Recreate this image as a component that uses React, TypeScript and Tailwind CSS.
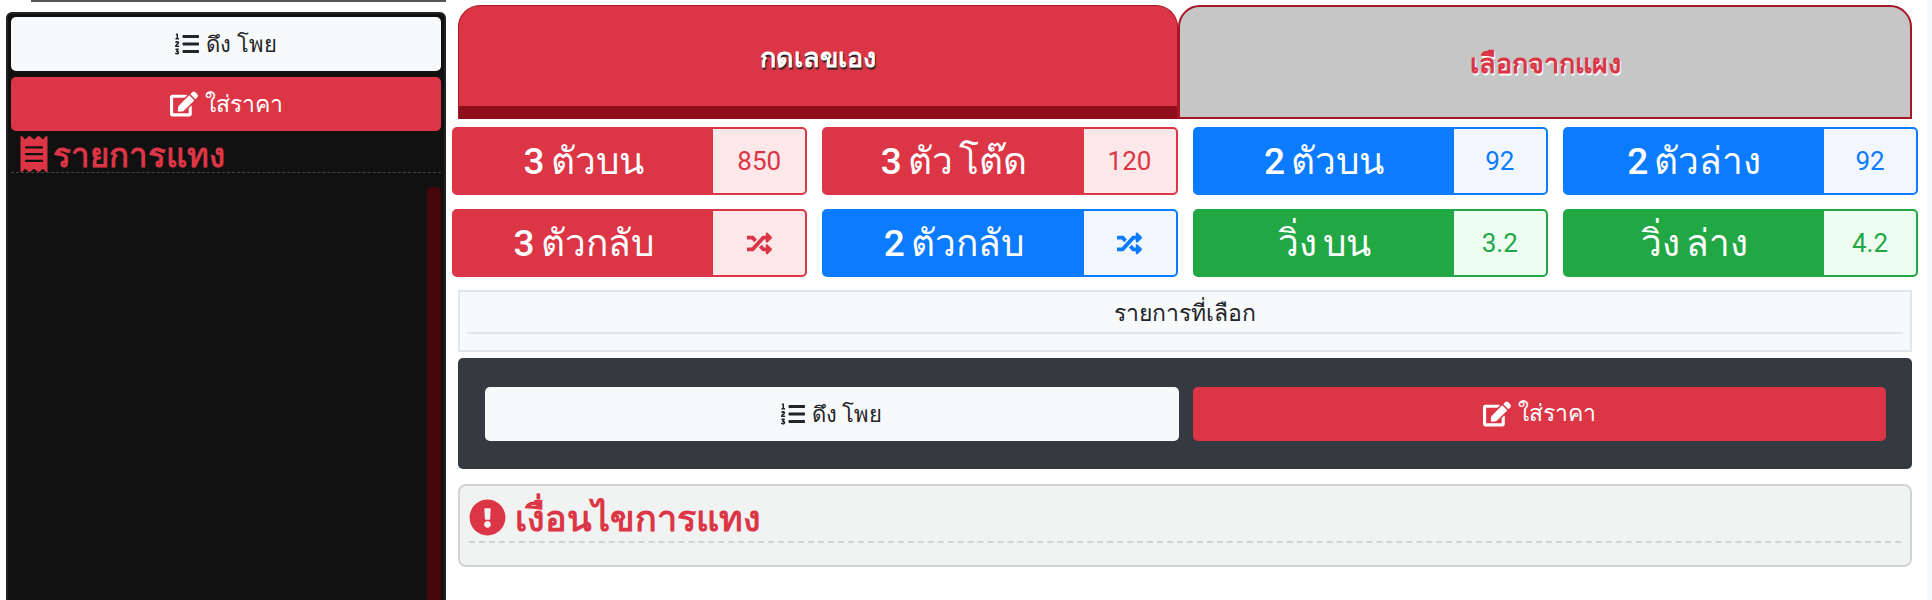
import { FaEdit, FaExclamationCircle, FaListOl, FaRandom, FaReceipt } from "react-icons/fa";
import type { ReactNode } from "react";

const tones = {
  red: { bar: "bg-[#dc3545]", border: "border-[#dc3545]", box: "bg-[#fde8e9]", text: "text-[#dc3545]" },
  blue: { bar: "bg-[#0b7bff]", border: "border-[#0b7bff]", box: "bg-[#f2f7ff]", text: "text-[#0b7bff]" },
  green: { bar: "bg-[#22a745]", border: "border-[#22a745]", box: "bg-[#edfdf1]", text: "text-[#22a745]" },
};

const rates: { label: string; value: ReactNode; tone: keyof typeof tones }[] = [
  { label: "3 ตัวบน", value: "850", tone: "red" },
  { label: "3 ตัว โต๊ด", value: "120", tone: "red" },
  { label: "2 ตัวบน", value: "92", tone: "blue" },
  { label: "2 ตัวล่าง", value: "92", tone: "blue" },
  { label: "3 ตัวกลับ", value: <FaRandom className="text-[25px]" />, tone: "red" },
  { label: "2 ตัวกลับ", value: <FaRandom className="text-[25px]" />, tone: "blue" },
  { label: "วิ่ง บน", value: "3.2", tone: "green" },
  { label: "วิ่ง ล่าง", value: "4.2", tone: "green" },
];

function PullButton() {
  return (
    <button className="flex h-[54px] flex-1 items-center justify-center gap-[7px] rounded-[5px] bg-[#f8f9fa] text-[22px] font-medium text-[#212529]">
      <FaListOl className="text-[24px]" />
      <span className="pt-[1px]">ดึง โพย</span>
    </button>
  );
}

function PriceButton() {
  return (
    <button className="flex h-[54px] flex-1 items-center justify-center gap-[7px] rounded-[5px] bg-[#dc3545] text-[23px] font-medium text-white">
      <FaEdit className="text-[28px]" />
      <span className="pt-[2px]">ใส่ราคา</span>
    </button>
  );
}

export default function App() {
  return (
    <div className="flex h-[600px] overflow-hidden bg-white font-['Roboto','Noto_Sans',sans-serif]">
      <aside className="w-[452px] shrink-0 pl-[6px]">
        <div className="ml-[25px] mr-[6px] h-[2px] bg-[#555555]" />
        <div className="mr-[6px] mt-[10px] flex h-[600px] flex-col rounded-t-[6px] border-2 border-[#222222] bg-[#111111] px-[3px] pt-[3px]">
          <div className="flex h-[54px] shrink-0">
            <PullButton />
          </div>
          <div className="mt-[6px] flex h-[54px] shrink-0">
            <PriceButton />
          </div>
          <div className="flex h-[42px] shrink-0 items-end border-b border-dashed border-[#444444] pl-[5px] text-[33px] font-bold leading-[32px] text-[#dc3545]">
            <FaReceipt className="text-[36px]" />
            <span className="ml-[1px]">รายการแทง</span>
          </div>
          <div className="mt-[14px] flex flex-1 justify-end">
            <div className="w-[14px] rounded-t-[5px] bg-[#45050a]" />
          </div>
        </div>
      </aside>

      <main className="w-[1460px] shrink-0 pl-[6px] pt-[5px]">
        <div className="flex h-[114px]">
          <div className="flex w-[720px] flex-col overflow-hidden rounded-t-[22px] border-x border-t border-[#a81525] bg-[#dc3545]">
            <div className="flex flex-1 items-center justify-center pt-[5px] text-[27px] font-bold text-white [text-shadow:1px_2px_1px_#222]">
              กดเลขเอง
            </div>
            <div className="h-[13px] bg-[#8f0e1c]" />
          </div>
          <div className="flex flex-1 items-center justify-center rounded-t-[22px] border-2 border-[#a81525] bg-[#c6c6c6] pt-[5px] text-[27px] font-bold text-[#dc3545] [text-shadow:1px_2px_1px_#fff]">
            เลือกจากแผง
          </div>
        </div>

        <div className="-mx-[6px] mt-[8px] grid grid-cols-4 gap-x-[15px] gap-y-[14px]">
          {rates.map((rate) => {
            const tone = tones[rate.tone];
            return (
              <div key={rate.label} className={`flex h-[68px] overflow-hidden rounded-[5px] border-2 ${tone.border} ${tone.bar}`}>
                <div className="flex flex-1 items-center justify-center pt-[2px] text-[37px] font-medium text-white [word-spacing:-3px]">
                  {rate.label}
                </div>
                <div className={`flex w-[92px] items-center justify-center text-[26px] ${tone.box} ${tone.text}`}>
                  {rate.value}
                </div>
              </div>
            );
          })}
        </div>

        <div className="mt-[13px] h-[62px] border-2 border-[#e2e5e9] bg-[#f8f9fa] px-[7px] pt-[1px]">
          <div className="h-[41px] border-b-2 border-[#e2e5e9] text-center text-[23px] leading-[41px] text-[#212529]">
            รายการที่เลือก
          </div>
        </div>

        <div className="mt-[6px] flex h-[111px] items-center gap-[14px] rounded-[5px] bg-[#343a40] pl-[27px] pr-[26px]">
          <PullButton />
          <PriceButton />
        </div>

        <div className="mt-[15px] h-[83px] rounded-[8px] border-2 border-[#d2d4d3] bg-[#f1f3f2] px-[9px] pt-[8px]">
          <div className="flex h-[49px] items-center gap-[9px] border-b-2 border-dashed border-[#d2d4d3] text-[36px] font-bold text-[#dc3545]">
            <FaExclamationCircle className="text-[37px]" />
            <span className="pt-[3px]">เงื่อนไขการแทง</span>
          </div>
        </div>
      </main>

      <div className="ml-[15px] w-[5px] shrink-0 bg-[#f7f8fa]" />
    </div>
  );
}
